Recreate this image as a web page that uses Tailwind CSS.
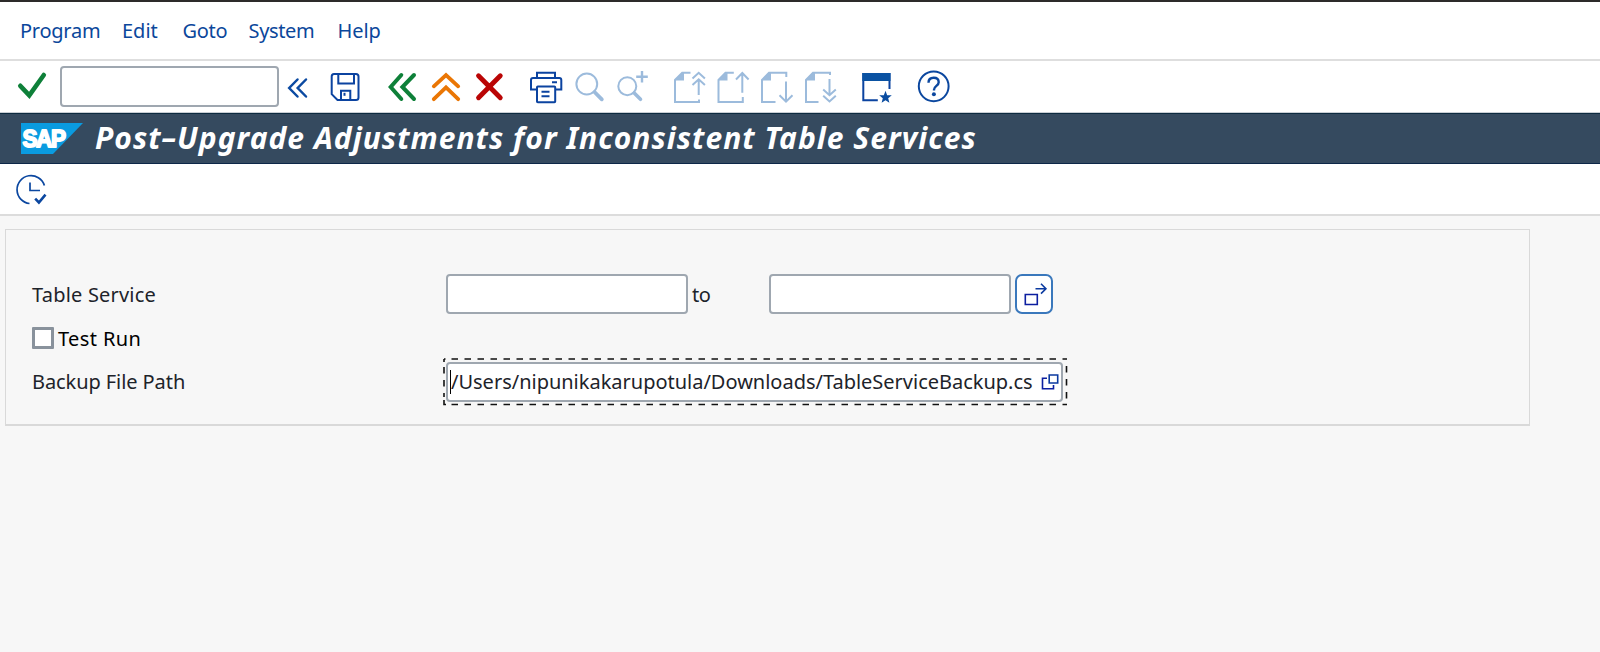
<!DOCTYPE html>
<html lang="en">
<head>
<meta charset="utf-8">
<title>Post-Upgrade Adjustments</title>
<script src="https://cdn.jsdelivr.net/npm/@tailwindcss/browser@4"></script>
</head>
<body class="flex h-[652px] w-[1600px] flex-col overflow-hidden bg-[#f7f7f7] font-['Noto_Sans',sans-serif] text-[20px] text-[#1d232a]">

  <!-- Menu bar -->
  <nav class="flex h-[61px] shrink-0 items-center border-t-2 border-b-2 border-t-[#2d2b2a] border-b-[#dedede] bg-white pt-px text-[#0b479b]">
    <a class="ml-[20px] w-[102px] tracking-[-0.250px]">Program</a>
    <a class="w-[60.500px]">Edit</a>
    <a class="w-[66px] tracking-[-0.3px]">Goto</a>
    <a class="w-[89px] tracking-[-0.350px]">System</a>
    <a class="tracking-[-0.1px]">Help</a>
  </nav>

  <!-- Standard toolbar -->
  <div class="flex h-[52px] shrink-0 items-start border-b border-b-[#c9ced4] bg-white pt-[5px]">
    <svg class="h-[41px] w-[60px] shrink-0" viewBox="0 66 60 41" fill="none" stroke="#0e8039" stroke-width="4.6"><path d="M20.300 85.800l9 9.500L43.800 75" stroke-linecap="round"/></svg>
    <input class="h-[41px] w-[219px] shrink-0 rounded-[4px] border-2 border-[#9fa7b0] bg-white px-2 outline-none">
    <svg class="h-[41px] w-[41px] shrink-0" viewBox="279 66 41 41" fill="none" stroke="#0b4aa2" stroke-width="2.5" stroke-linecap="round"><path d="M297.500 79.500L289.200 88l8.300 8.500M306 79.500L297.700 88l8.300 8.500"/></svg>
    <svg class="h-[41px] w-[55px] shrink-0" viewBox="320 66 55 41" fill="none" stroke="#0b43a0" stroke-width="2"><path d="M334 74h22q2.500 0 2.500 2.500v21q0 2.500-2.500 2.500h-18.500l-5.800-5.800V76.500q0-2.500 2.300-2.500zM338.300 74v9.500h15.700V74M341 100v-9.200h9.300V100"/><path d="M344.500 92.800v3"/></svg>
    <svg class="h-[41px] w-[50px] shrink-0" viewBox="375 66 50 41" fill="none" stroke="#0e8039" stroke-width="4" stroke-linecap="round"><path d="M401.300 75L390.700 87l10.600 12M414 75L402.400 87l11.600 12"/></svg>
    <svg class="h-[41px] w-[44px] shrink-0" viewBox="425 66 44 41" fill="none" stroke="#ea7604" stroke-width="3.800" stroke-linecap="round"><path d="M433.800 86.300L446 75l12.200 11.300M433.800 99.200L446 87.300l12.200 11.900"/></svg>
    <svg class="h-[41px] w-[51px] shrink-0" viewBox="469 66 51 41" fill="none" stroke="#ba0505" stroke-width="4.800" stroke-linecap="round"><path d="M478.500 75.700l21.800 22M500.300 75.700l-21.800 22"/></svg>
    <svg class="h-[41px] w-[50px] shrink-0" viewBox="520 66 50 41" fill="none" stroke="#0b43a0" stroke-width="2"><path d="M537 78v-5.300h18V78M537 89.500h-6V80q0-2 2-2h26.300q2 0 2 2v9.500H555"/><rect x="537" y="86.500" width="18.200" height="15.700" rx=".8"/><path d="M541.500 91.800h8M541.500 96.200h8M552 82.200h5"/></svg>
    <svg class="h-[41px] w-[42px] shrink-0" viewBox="570 66 42 41" fill="none" stroke="#9cbbdc" stroke-width="2"><circle cx="586.800" cy="84" r="10.400"/><path d="M594.500 92l7.300 7.300" stroke-width="3.800" stroke-linecap="round"/></svg>
    <svg class="h-[41px] w-[50px] shrink-0" viewBox="612 66 50 41" fill="none" stroke="#9cbbdc" stroke-width="2"><circle cx="627.300" cy="86.200" r="9"/><path d="M634.200 93l6.300 6.300" stroke-width="3.600" stroke-linecap="round"/><path d="M642 71v11.500M636.200 76.700h11.600" stroke-width="2.400"/></svg>
    <svg class="h-[41px] w-[50px] shrink-0" viewBox="662 66 50 41" fill="none" stroke="#9cbbdc" stroke-width="2"><path d="M690.500 72.800h-8.300L675 80v22h24v-2.500M692.500 78.500l6.200-5.700 6.200 5.700M692.500 85l6.200-5.700 6.200 5.700M698.700 79.500v15.500"/><path d="M675 80.500h9v-7.500h-2z" fill="#9cbbdc" stroke="none"/></svg>
    <svg class="h-[41px] w-[43px] shrink-0" viewBox="712 66 43 41" fill="none" stroke="#9cbbdc" stroke-width="2"><path d="M733.800 72.800h-8.300L718.500 80v22h24.300v-5M736 79.500l6.300-6.500 6.300 6.500M742.300 74v18.800"/><path d="M718.500 80.500h9v-7.500h-2z" fill="#9cbbdc" stroke="none"/></svg>
    <svg class="h-[41px] w-[43px] shrink-0" viewBox="755 66 43 41" fill="none" stroke="#9cbbdc" stroke-width="2"><path d="M775.500 102H762V80l7-7.200h17.300V77M779.500 95.200l6.500 6.500 6.500-6.500M786 81.500v19.500"/><path d="M762 80.500h9v-7.500h-2z" fill="#9cbbdc" stroke="none"/></svg>
    <svg class="h-[41px] w-[54px] shrink-0" viewBox="798 66 54 41" fill="none" stroke="#9cbbdc" stroke-width="2"><path d="M818.500 102H806V80l7-7.200h17V75M823.200 89.500l6.300 5.700 6.300-5.700M823.200 95.800l6.300 5.700 6.300-5.700M829.500 79v16"/><path d="M806 80.500h9v-7.500h-2z" fill="#9cbbdc" stroke="none"/></svg>
    <svg class="h-[41px] w-[58px] shrink-0" viewBox="852 66 58 41" fill="none" stroke="#0b43a0" stroke-width="2"><path d="M877.800 100.200H863.300V74h26.200v15"/><path d="M862.300 73h28.200v8h-28.200z" fill="#0a52a2" stroke="none"/><path d="M885.500 90.800l1.650 4.350 4.650.2-3.600 2.950 1.200 4.500-3.900-2.500-3.900 2.500 1.200-4.500-3.600-2.950 4.650-.2z" fill="#0a4ca0" stroke="none"/></svg>
    <svg class="h-[41px] w-[50px] shrink-0" viewBox="910 66 50 41" fill="none" stroke="#0b479f" stroke-width="2"><circle cx="933.700" cy="86.300" r="14.900"/><path d="M928.500 82.800c0-3.300 2.300-5 5.200-5 3.200 0 5 1.800 5 4.500 0 3.500-4.700 3.700-4.700 7.400v.8" stroke-width="2.400"/><circle cx="933.900" cy="94.200" r="2" fill="#0b479f" stroke="none"/></svg>
  </div>

  <!-- Title bar -->
  <header class="flex h-[51px] shrink-0 items-center border-y border-t-[#0d2b40] border-b-[#0d2748] bg-[#354a5f] pb-[2px]">
    <svg class="mt-[2px] ml-[21px] h-[31px] w-[62px] shrink-0" viewBox="0 0 62 31"><path d="M0 0h62L32 31H0z" fill="#0a9be0"/><text x="1.500" y="23.700" textLength="42" lengthAdjust="spacingAndGlyphs" font-family="Liberation Sans, sans-serif" font-weight="700" font-size="23.500" letter-spacing="-1.500" fill="#fff" stroke="#fff" stroke-width="1.800" stroke-linejoin="round">SAP</text></svg>
    <h1 class="ml-[12px] text-[30px] leading-[40px] font-bold tracking-[1.040px] whitespace-nowrap text-white italic">Post–Upgrade Adjustments for Inconsistent Table Services</h1>
  </header>

  <!-- Application toolbar -->
  <div class="flex h-[52px] shrink-0 items-center border-b-2 border-b-[#dcdcdc] bg-white">
    <svg class="ml-[10px] h-[50px] w-[42px]" viewBox="9.500 164 42 50" fill="none" stroke="#0b47a0" stroke-width="1.700"><path d="M43.900 185.400A14 14 0 1 0 29 203.500"/><path d="M29.500 182.500v8h10"/><path d="M34.700 198.700l3.700 3.800 6.600-7.800" stroke-width="2.600"/></svg>
  </div>

  <!-- Selection screen -->
  <main class="mt-[13px] ml-[5px] h-[197px] w-[1525px] shrink-0 border border-b-2 border-[#d9d9d9] pt-[42px] pl-[26px]">
    <div class="flex h-[44px] items-center">
      <label class="w-[414px] pt-px tracking-[0.2px]">Table Service</label>
      <input class="h-[40px] w-[242px] rounded-[4px] border-2 border-[#9fa7b0] bg-white px-2 outline-none">
      <span class="ml-[4px] w-[77px] pt-px tracking-[-0.400px]">to</span>
      <input class="h-[40px] w-[242px] rounded-[4px] border-2 border-[#9fa7b0] bg-white px-2 outline-none">
      <button class="ml-[4px] flex h-[40px] w-[38px] items-center justify-center rounded-[7px] border-2 border-[#3a78bc] bg-white">
        <svg class="h-[36px] w-[34px]" viewBox="1017.500 276 34 36" fill="none" stroke="#0c1fa0" stroke-width="1.600"><path d="M1025.800 294.500h12v10h-12z"/><path d="M1036 288.700h10M1041.500 283.800l4.900 4.900-4.900 4.900" stroke="#0b3aa0"/></svg>
      </button>
    </div>
    <div class="flex h-[44px] items-center text-black">
      <span class="h-[22px] w-[22px] rounded-[1px] border-[3px] border-[#89929c] bg-white"></span>
      <label class="ml-[4px] pt-px tracking-[0.400px]">Test Run</label>
    </div>
    <div class="flex h-[44px] items-center">
      <label class="w-[414px] tracking-[-0.080px]">Backup File Path</label>
      <div class="relative flex h-[40px] w-[617px] items-center rounded-[4px] border-2 border-[#9fa7b0] bg-white">
        <svg class="pointer-events-none absolute -top-[7px] -left-[5px] h-[49px] w-[625px]" viewBox="0 0 625 49" fill="none" stroke="#111" stroke-width="2"><path d="M8.500 2H624" stroke-width="1.700" stroke-dasharray="6.500 6.500"/><path d="M8.500 47.500H624" stroke-width="1.700" stroke-dasharray="6.500 6.500"/><path d="M1 2v3M1 10v6.500M1 23v6.500M1 36v4M1 43v5.300M1 47.500h2M1 2h1.500" stroke-width="1.600"/><path d="M623.500 9v6.500M623.500 22v6.500M623.500 35v6.500" stroke-width="1.600"/></svg>
        <span class="ml-[2px] h-[24px] w-px bg-black"></span>
        <span class="w-[589px] whitespace-nowrap tracking-[-0.010px]">/Users/nipunikakarupotula/Downloads/TableServiceBackup.cs</span>
        <svg class="h-[20px] w-[20px] shrink-0" viewBox="1040 372 20 20" fill="none" stroke="#0c1fa0" stroke-width="1.600"><path d="M1049.200 375h8.500v8h-8.500z" stroke="#0b3aa0"/><path d="M1047 378.200h-4.500v10.500h11V385"/></svg>
      </div>
    </div>
  </main>
</body>
</html>
